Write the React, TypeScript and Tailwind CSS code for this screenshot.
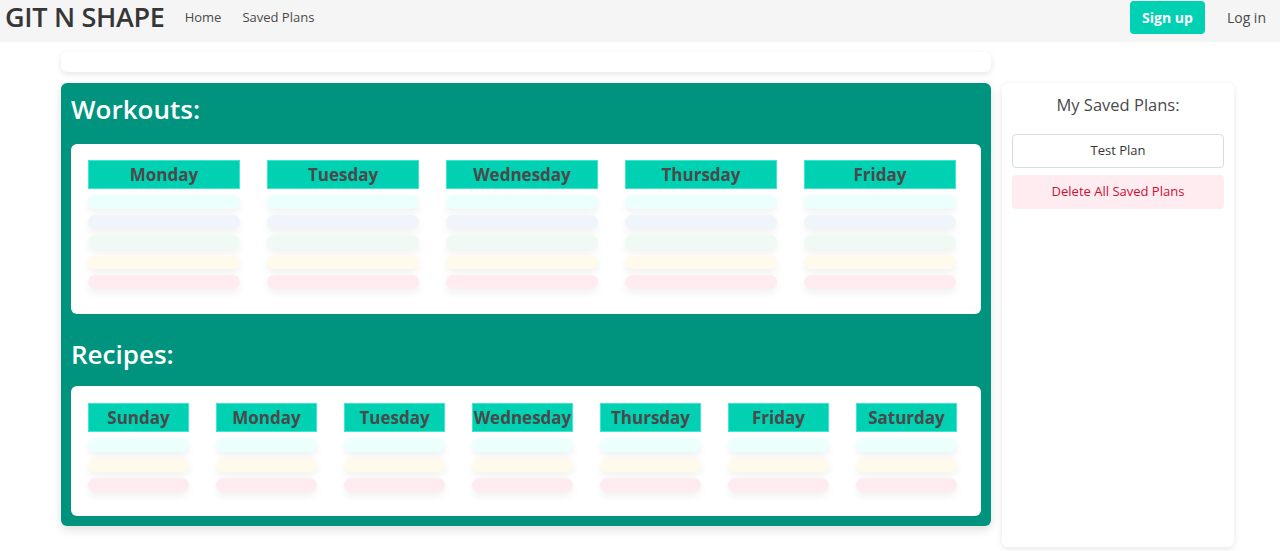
const WORKOUT_DAYS = ["Monday", "Tuesday", "Wednesday", "Thursday", "Friday"];
const RECIPE_DAYS = ["Sunday", "Monday", "Tuesday", "Wednesday", "Thursday", "Friday", "Saturday"];

const WORKOUT_ROWS = ["bg-[#ebfffc]", "bg-[#eff5fb]", "bg-[#effaf5]", "bg-[#fffaeb]", "bg-[#feecf0]"];
const RECIPE_ROWS = ["bg-[#ebfffc]", "bg-[#fffaeb]", "bg-[#feecf0]"];

function DayColumn({ day, rows, width }: { day: string; rows: string[]; width: string }) {
  return (
    <div className={`${width} flex flex-col`}>
      <div className="h-[29px] bg-[#00d1b2] border border-[#3ee6cc] flex items-center justify-center text-[17px] font-bold text-[#4a4a4a]">
        {day}
      </div>
      <div className="flex flex-col gap-[6px] mt-[6px]">
        {rows.map((r, i) => (
          <div key={i} className={`h-[14px] rounded-full ${r} shadow-[0_4px_8px_rgba(0,0,0,0.06)]`} />
        ))}
      </div>
    </div>
  );
}

export default function App() {
  return (
    <div className="min-h-[551px] bg-white text-[#4a4a4a]" style={{ fontFamily: '"Open Sans", "Noto Sans", sans-serif' }}>
      {/* Navbar */}
      <nav className="h-[42px] bg-[#f5f5f5] pl-[5px] pr-[14px]">
        <div className="h-[35px] flex items-center">
          <span className="text-[27px] font-semibold text-[#363636] tracking-[-0.3px]">GIT N SHAPE</span>
          <a className="ml-[20px] text-[13px] text-[#4a4a4a]">Home</a>
          <a className="ml-[21px] text-[13px] text-[#4a4a4a]">Saved Plans</a>
          <div className="ml-auto flex items-center">
            <button className="h-[33px] px-[12px] rounded-[4px] bg-[#00d1b2] text-white text-[14px] font-bold">Sign up</button>
            <a className="ml-[22px] text-[14px] text-[#4a4a4a]">Log in</a>
          </div>
        </div>
      </nav>

      <div className="flex gap-[11px] pl-[61px] pt-[10px]">
        {/* Main column */}
        <div className="w-[930px] flex flex-col">
          <div className="h-[20px] bg-white rounded-[6px] shadow-[0_2px_6px_rgba(0,0,0,0.1)]" />
          <div className="mt-[11px] bg-[#00947e] rounded-[6px] p-[10px] shadow-[0_4px_10px_rgba(0,0,0,0.12)]">
            <h2 className="text-[26px] font-semibold text-white leading-none mt-[3px] mb-[22px]">Workouts:</h2>
            <div className="bg-white rounded-[6px] pt-[16px] pl-[17px] pb-[25px] flex gap-[27px]">
              {WORKOUT_DAYS.map((d) => (
                <DayColumn key={d} day={d} rows={WORKOUT_ROWS} width="w-[152px]" />
              ))}
            </div>
            <h2 className="text-[26px] font-semibold text-white leading-none mt-[27px] mb-[19px]">Recipes:</h2>
            <div className="bg-white rounded-[6px] pt-[17px] pl-[17px] pb-[24px] flex gap-[27px]">
              {RECIPE_DAYS.map((d) => (
                <DayColumn key={d} day={d} rows={RECIPE_ROWS} width="w-[101px]" />
              ))}
            </div>
          </div>
        </div>

        {/* Sidebar */}
        <aside className="mt-[31px] w-[232px] h-[464px] bg-white rounded-[6px] shadow-[0_2px_6px_rgba(0,0,0,0.1)] px-[10px] pt-[10px]">
          <h3 className="text-center text-[16.5px] text-[#4a4a4a]">My Saved Plans:</h3>
          <button className="mt-[16px] w-full h-[34px] border border-[#dbdbdb] rounded-[4px] bg-white text-[13px] text-[#363636]">
            Test Plan
          </button>
          <button className="mt-[7px] w-full h-[34px] rounded-[4px] bg-[#feecf0] text-[13px] text-[#cc0f35]">
            Delete All Saved Plans
          </button>
        </aside>
      </div>
    </div>
  );
}
